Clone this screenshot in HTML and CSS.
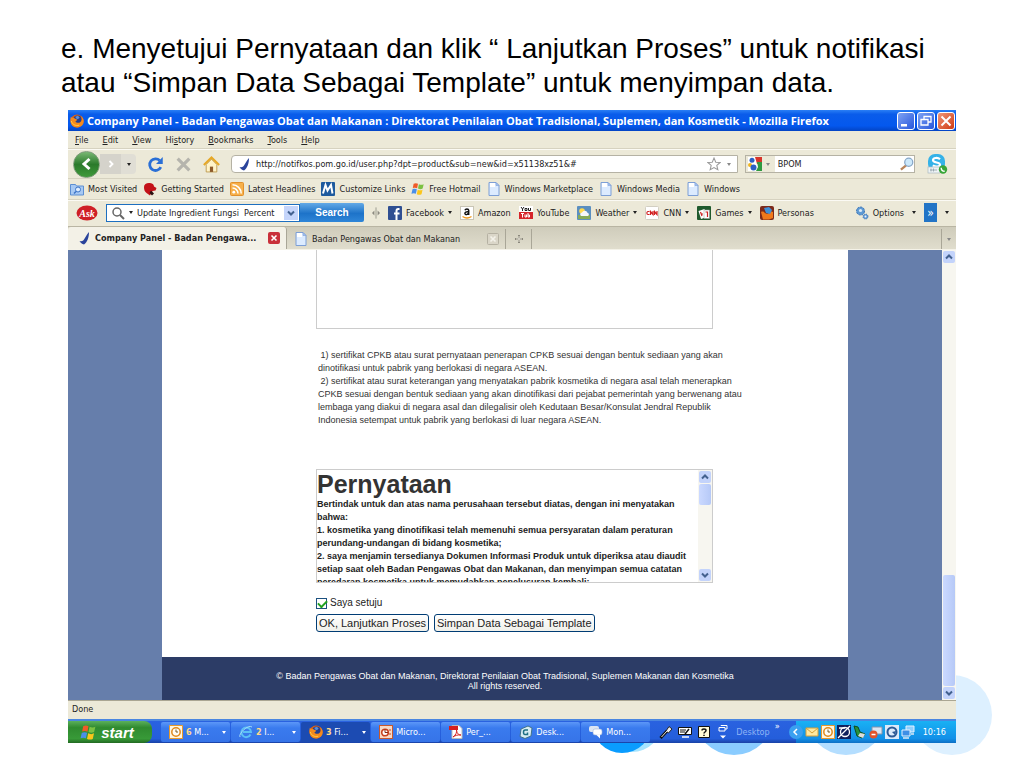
FILE: index.html
```html
<!DOCTYPE html>
<html lang="id">
<head>
  <meta charset="UTF-8">
  <meta name="viewport" content="width=device-width, initial-scale=1.0">
  <title>Company Panel - Badan Pengawas Obat dan Makanan</title>
  <link rel="stylesheet" href="styles.css">
</head>
<body>
  <!-- shared icons -->
  <svg class="defs" aria-hidden="true">
    <symbol id="page" viewBox="0 0 14 14">
      <path d="M2 .5h7l3 3v10H2z" fill="#dcebff" stroke="#7d9fd6"/>
      <path d="M3 1h5v4H3z" fill="#fff"/>
      <path d="M9 .5v3h3z" fill="#a9c5f2" stroke="#7d9fd6" stroke-width=".6"/>
    </symbol>
    <symbol id="fox" viewBox="0 0 16 16">
      <circle cx="8" cy="8" r="7.4" fill="#e8610a"/>
      <circle cx="8.6" cy="6.2" r="4.6" fill="#243f8f"/>
      <path d="M6 3l3-1 2 2-2 2-2-1z" fill="#5b8fd8"/>
      <path d="M1 3c0 0 1 1.500 3 1.500C5.500 4.500 6 5.500 7.500 6 9 6.500 7.500 8 6.200 8.200 7 10.500 11 11 13 8c1-2 .5-4-.5-5.500C15.500 4 16.500 8 15 11.500c-2.500 5-10 5-13 1C0 9 .3 5.500 1 3z" fill="#f58a1c"/>
      <path d="M1.500 8c1 4 5 6 9 4.800" fill="none" stroke="#ffd04a" stroke-width="1.100"/>
    </symbol>
    <symbol id="tick" viewBox="0 0 14 14">
      <path d="M12 1C12 6 10.500 11 7 13.500 5 13 3.500 12 2.500 10c2.500.5 3.500 0 4.500-1.500C8.500 6.500 9.500 3.500 12 1z" fill="#29439b"/>
    </symbol>
    <symbol id="winflag" viewBox="0 0 16 16">
      <path d="M3 2c2-1 3.500-.8 5 0L7 7.200C5.500 6.300 3.800 6.300 2 7z" fill="#ef5a28"/>
      <path d="M9 2.500c2 1 3.700 1 5.500 0l-1.200 5c-1.800 1-3.600.8-5.300 0z" fill="#7cc142"/>
      <path d="M1.700 8.300c2-.9 3.500-.7 5 0l-1.200 5.200c-1.500-.9-3.200-.9-5 0z" fill="#4a8fe8"/>
      <path d="M7.700 8.800c2 1 3.700 1 5.500 0L12 14c-1.800 1-3.600.8-5.400 0z" fill="#fbc61b"/>
    </symbol>
    <symbol id="up" viewBox="0 0 8 8"><path d="M1 5.500l3-3 3 3" fill="none" stroke="#43618f" stroke-width="2"/></symbol>
    <symbol id="down" viewBox="0 0 8 8"><path d="M1 2.500l3 3 3-3" fill="none" stroke="#43618f" stroke-width="2"/></symbol>
    <symbol id="clock" viewBox="0 0 14 14">
      <path d="M.5.500h13v13H.5z" fill="#fff6e0" stroke="#e89a2c"/>
      <circle cx="7" cy="7" r="4.200" fill="#fffdf5" stroke="#e08a1c" stroke-width="1.500"/>
      <path d="M7 4.500V7h2" fill="none" stroke="#7a5a20"/>
    </symbol>
  </svg>

  <main class="slide">
    <!-- decorative circles behind the window -->
    <svg class="dots" width="412" height="80" viewBox="0 0 412 80" aria-hidden="true">
      <circle cx="52" cy="47" r="30" fill="#a5e4ff"/>
      <circle cx="42" cy="48" r="30" fill="#0a9cff"/>
      <circle cx="154" cy="40" r="40" fill="#8accff"/>
      <circle cx="266" cy="40" r="40" fill="#b4deff"/>
      <circle cx="372" cy="40" r="40" fill="#ddf0ff"/>
    </svg>

    <h1 class="caption">e. Menyetujui Pernyataan dan klik “ Lanjutkan Proses” untuk notifikasi<br>atau “Simpan Data Sebagai Template” untuk menyimpan data.</h1>

    <section class="window">
      <header class="titlebar">
        <svg class="ico"><use href="#fox"/></svg>
        <span class="title">Company Panel - Badan Pengawas Obat dan Makanan : Direktorat Penilaian Obat Tradisional, Suplemen, dan Kosmetik - Mozilla Firefox</span>
        <button class="wbtn" aria-label="Minimize"><svg viewBox="0 0 16 16"><path d="M3 11h6v2.500H3z" fill="#fff"/></svg></button>
        <button class="wbtn" aria-label="Restore"><svg viewBox="0 0 16 16"><path d="M6 6V3.500h7V9h-3M3 6.500h7V12H3z" fill="none" stroke="#fff" stroke-width="1.300"/></svg></button>
        <button class="wbtn close" aria-label="Close"><svg viewBox="0 0 16 16"><path d="M3.500 3.500l9 9m0-9l-9 9" stroke="#fff" stroke-width="2"/></svg></button>
      </header>

      <nav class="menubar">
        <a href="#"><u>F</u>ile</a>
        <a href="#"><u>E</u>dit</a>
        <a href="#"><u>V</u>iew</a>
        <a href="#">Hi<u>s</u>tory</a>
        <a href="#"><u>B</u>ookmarks</a>
        <a href="#"><u>T</u>ools</a>
        <a href="#"><u>H</u>elp</a>
      </nav>

      <div class="navbar">
        <div class="backfwd">
          <button class="back" aria-label="Back"><svg viewBox="0 0 16 16"><path d="M10.500 3L5 8l5.500 5" fill="none" stroke="#fff" stroke-width="3"/></svg></button>
          <button class="fwd" aria-label="Forward"><svg viewBox="0 0 16 16"><path d="M6 4l4 4-4 4" fill="none" stroke="#fff" stroke-width="2.500"/></svg></button>
          <button class="hist" aria-label="Recent pages"><i class="arrow"></i></button>
        </div>
        <button class="nbtn" aria-label="Reload"><svg viewBox="0 0 16 16"><path d="M13 10.500A5.500 5.500 0 1 1 12 4.300" fill="none" stroke="#2a6fd6" stroke-width="2.600"/><path d="M14.800 1v6.500H8.500z" fill="#2a6fd6"/></svg></button>
        <button class="nbtn" aria-label="Stop"><svg viewBox="0 0 16 16"><path d="M2.500 2.500l11 11m0-11l-11 11" stroke="#b5b4ad" stroke-width="3"/></svg></button>
        <button class="nbtn" aria-label="Home"><svg viewBox="0 0 16 16"><path d="M3 8l5-5 5 5v7H3z" fill="#fff3c8" stroke="#b89448" stroke-width=".8"/><path d="M.8 8.500L8 1.500l7.200 7" fill="none" stroke="#e6a827" stroke-width="2"/><path d="M6.500 10h3v5h-3z" fill="#8d5a2c"/></svg></button>
        <div class="urlbox">
          <span class="site"><svg class="ico"><use href="#tick"/></svg></span>
          <input class="field" type="text" aria-label="Location" value="http://notifkos.pom.go.id/user.php?dpt=product&amp;sub=new&amp;id=x51138xz51&amp;#">
          <svg class="ico" viewBox="0 0 16 16"><path d="M8 1.200l2 4.700 5 .4-3.800 3.300 1.200 5L8 12l-4.400 2.600 1.200-5L1 6.300l5-.4z" fill="#fff" stroke="#9a9a9a" stroke-width="1.200"/></svg>
          <button class="mini" aria-label="History"><i class="arrow grey"></i></button>
        </div>
        <div class="searchbox">
          <span class="engine">
            <svg class="ico" viewBox="0 0 14 14"><path d="M0 0h14v14H0z" fill="#fff"/><path d="M7 0h7v7H9z" fill="#d8342a"/><path d="M9 5h5v9H8l2-4z" fill="#2f9a41"/><circle cx="4" cy="3.200" r="2.500" fill="#2b5fc4"/><circle cx="2" cy="8" r="2" fill="#f0b622"/><circle cx="5.500" cy="10.500" r="3" fill="#2b5fc4"/></svg>
            <i class="arrow grey"></i>
          </span>
          <input class="field" type="text" aria-label="Search the web" value="BPOM">
          <svg class="ico" viewBox="0 0 16 16"><path d="M7 9.500l-6 5" stroke="#b9855b" stroke-width="2.600"/><circle cx="10" cy="6" r="4.600" fill="#cde9fb" stroke="#86a6c8" stroke-width="1.400"/></svg>
        </div>
        <svg class="skype" viewBox="0 0 22 22"><rect x="2" y="1" width="17" height="17" rx="7" fill="#35b2e8"/><path d="M14 6.200C12 4.300 7 4.500 7 7.200c0 3 7 1.600 7 4.400 0 2.700-5 2.600-7.200.7" fill="none" stroke="#fff" stroke-width="2.200"/><rect x="2" y="14" width="12" height="6" fill="#eef3f5" stroke="#a9b8bf" stroke-width=".7"/><path d="M5 15.500v3m2.500-3v3M4 17h7" stroke="#8fa0a8" stroke-width=".8"/><circle cx="17" cy="16.500" r="4.200" fill="#38a538"/><path d="M15.200 14.800c0 2 1.500 3.500 3.500 3.500" fill="none" stroke="#fff" stroke-width="1.400"/></svg>
      </div>

      <nav class="bookmarks">
        <a href="#"><svg class="ico" viewBox="0 0 14 14"><path d="M.5 2.500h5l1 1.500h7v9H.5z" fill="#a7c9f3" stroke="#5c8fd2"/><circle cx="8" cy="7.500" r="2.500" fill="#dfeeff" stroke="#3b74c6"/><path d="M6 9.500l-2 2" stroke="#3b74c6" stroke-width="1.500"/></svg>Most Visited</a>
        <a href="#"><svg class="ico" viewBox="0 0 14 14"><path d="M1 5c0-3 3-4.500 6-4 3 .4 4 2 4 3.500l2.500 1.500-1 2.500-3 .5C9 11 7.500 12 7 13.500L3.500 11C1.500 9.500 1 7.500 1 5z" fill="#c31219"/><path d="M8 8.500l3 3-2 2L6.500 11z" fill="#2b1010"/></svg>Getting Started</a>
        <a href="#"><svg class="ico" viewBox="0 0 14 14"><rect x=".5" y=".5" width="13" height="13" rx="1" fill="#f7b04a" stroke="#e1902c"/><circle cx="3.800" cy="10.200" r="1.400" fill="#fff"/><path d="M2.500 6A5.500 5.500 0 0 1 8 11.500M2.500 2.800a8.700 8.700 0 0 1 8.700 8.700" fill="none" stroke="#fff" stroke-width="1.500"/></svg>Latest Headlines</a>
        <a href="#"><svg class="ico" viewBox="0 0 14 14"><rect width="14" height="14" rx="1" fill="#1e5a9e"/><path d="M2 11.500L4.500 3l2 5.500L10 3l1.500 8.500" fill="none" stroke="#fff" stroke-width="2"/></svg>Customize Links</a>
        <a href="#"><svg class="ico"><use href="#winflag"/></svg>Free Hotmail</a>
        <a href="#"><svg class="ico"><use href="#page"/></svg>Windows Marketplace</a>
        <a href="#"><svg class="ico"><use href="#page"/></svg>Windows Media</a>
        <a href="#"><svg class="ico"><use href="#page"/></svg>Windows</a>
      </nav>

      <div class="askbar">
        <svg class="asklogo" viewBox="0 0 22 16" role="img" aria-label="Ask"><ellipse cx="11" cy="8" rx="10.500" ry="7.500" fill="#cf1f26"/><text x="11" y="12" class="asktext">Ask</text></svg>
        <div class="combo">
          <svg class="ico" viewBox="0 0 14 14"><circle cx="6" cy="6" r="4" fill="none" stroke="#666" stroke-width="1.500"/><path d="M9 9l4 4" stroke="#666" stroke-width="2"/></svg>
          <i class="arrow"></i>
          <input class="field" type="text" aria-label="Ask search" value="Update Ingredient Fungsi  Percent">
          <button class="drop" aria-label="Open list"><svg><use href="#down"/></svg></button>
        </div>
        <button class="asksearch">Search</button>
        <svg class="split" viewBox="0 0 10 14"><path d="M5 0v14" stroke="#8c8a80"/><path d="M3 4L0 7l3 3zM7 4l3 3-3 3z" fill="#8c8a80"/></svg>
        <a href="#"><svg class="ico" viewBox="0 0 14 14"><rect width="14" height="14" rx="1" fill="#2f4f92"/><path d="M11.500 3h-1.200C9 3 8.500 3.700 8.500 5v9M6 7.500h5.500" fill="none" stroke="#fff" stroke-width="2"/></svg>Facebook<i class="arrow"></i></a>
        <a href="#"><svg class="ico" viewBox="0 0 14 14"><rect x=".5" y=".5" width="13" height="13" fill="#fff" stroke="#c9c5b5"/><path d="M5 4.200C5.500 2.500 8.500 2.500 8.700 4.300V9M8.500 5.800C6 5.500 4.800 6.200 4.900 7.500c.2 1.600 2.600 1.500 3.600-.3" fill="none" stroke="#111" stroke-width="1.500"/><path d="M2.500 10.500c3 2 6 2 9 0" fill="none" stroke="#f29a1c" stroke-width="1.300"/></svg>Amazon</a>
        <a href="#"><svg class="ico" viewBox="0 0 14 14"><path d="M0 0h14v6H0z" fill="#fff"/><path d="M0 6h14v7H0z" fill="#d6262b"/><path d="M2 1l1.500 2L5 1M3.500 3v2M6 2.500h2v2H6zM9.500 2v2.500h2V2" fill="none" stroke="#222"/><path d="M2 7.500h3M3.500 7.500v4M6 8.500v2.500h1.500V8.500M9 7v4h1.500V9H9" fill="none" stroke="#fff"/></svg>YouTube</a>
        <a href="#"><svg class="ico" viewBox="0 0 14 14"><rect width="14" height="14" rx="1" fill="#5b8fc0"/><path d="M1 9h12v4H1z" fill="#86ab59"/><circle cx="5" cy="5" r="2.800" fill="#ffd94d"/><path d="M4 10a2 2 0 0 1 1-3.600 3 3 0 0 1 5.500.3A1.800 1.800 0 0 1 11 10z" fill="#f4f7fa"/></svg>Weather<i class="arrow"></i></a>
        <a href="#"><svg class="ico" viewBox="0 0 14 14"><rect x=".5" y=".5" width="13" height="13" rx="1" fill="#fff" stroke="#d2cfc2"/><path d="M4.500 5.500H3C1.500 5.500 1.500 8.500 3 8.500h1.500M5.500 9V5.500l2.500 3V5M9.500 9V5.500l2.500 3V5" fill="none" stroke="#d21f1f" stroke-width="1.200"/></svg>CNN<i class="arrow"></i></a>
        <a href="#"><svg class="ico" viewBox="0 0 14 14"><rect width="14" height="14" rx="1" fill="#1f5a2d"/><path d="M1.500 5l6-2 2.500 8-6 2z" fill="#fff"/><path d="M7 4h5.500v8.500H7z" fill="#fff" stroke="#999" stroke-width=".5"/><path d="M3.500 6l1.500 4M8.500 6h2v5M4 8h2" fill="none" stroke="#c22" stroke-width="1.200"/></svg>Games<i class="arrow"></i></a>
        <a href="#"><svg class="ico" viewBox="0 0 14 14"><rect width="14" height="14" rx="2" fill="#7c2a1a"/><path d="M1 6c2-1 3 0 4 1 1.500 1.500 4 1 5-2l3 1v6l-4 1.500H3z" fill="#f0791c"/><path d="M4 2l5-1 3 3-2 4-4-1z" fill="#3f8fd8"/></svg>Personas</a>
        <a class="options" href="#"><svg class="ico" viewBox="0 0 14 14"><circle cx="5.500" cy="5" r="4" fill="#5e9ad4" stroke="#3e73b4" stroke-dasharray="2 1"/><circle cx="5.500" cy="4.500" r="1.600" fill="#dceaf7"/><circle cx="10.500" cy="10.500" r="2.500" fill="#5e9ad4" stroke="#3e73b4" stroke-dasharray="1 1"/><circle cx="10.500" cy="10.500" r="1" fill="#eef"/></svg>Options</a>
        <i class="arrow"></i>
        <button class="more" aria-label="More">»</button>
        <i class="arrow"></i>
      </div>

      <div class="tabs">
        <button class="tab active"><svg class="ico"><use href="#tick"/></svg><span>Company Panel - Badan Pengawa...</span><svg class="x" viewBox="0 0 12 12"><rect width="12" height="12" rx="2" fill="#c9303a"/><path d="M3.500 3.500l5 5m0-5l-5 5" stroke="#fff" stroke-width="1.600"/></svg></button>
        <button class="tab"><svg class="ico"><use href="#page"/></svg><span>Badan Pengawas Obat dan Makanan</span><svg class="x" viewBox="0 0 12 12"><rect x=".5" y=".5" width="11" height="11" rx="1" fill="#dad6c8" stroke="#b5b1a2"/><path d="M3.500 3.500l5 5m0-5l-5 5" stroke="#f4f2ea" stroke-width="1.600"/></svg></button>
        <button class="newtab" aria-label="New tab"><svg viewBox="0 0 10 10"><path d="M5 1v8M1 5h8" stroke="#8a877b" stroke-width="2"/><path d="M5 2v6M2 5h6" stroke="#e7e4d8"/></svg></button>
        <button class="alltabs" aria-label="List all tabs"><i class="arrow grey"></i></button>
      </div>

      <div class="viewport">
        <div class="page">
          <div class="form">
            <div class="upload"></div>
            <div class="notes">
              <p>&nbsp;1) sertifikat CPKB atau surat pernyataan penerapan CPKB sesuai dengan bentuk sediaan yang akan<br>dinotifikasi untuk pabrik yang berlokasi di negara ASEAN.</p>
              <p>&nbsp;2) sertifikat atau surat keterangan yang menyatakan pabrik kosmetika di negara asal telah menerapkan<br>CPKB sesuai dengan bentuk sediaan yang akan dinotifikasi dari pejabat pemerintah yang berwenang atau<br>lembaga yang diakui di negara asal dan dilegalisir oleh Kedutaan Besar/Konsulat Jendral Republik<br>Indonesia setempat untuk pabrik yang berlokasi di luar negara ASEAN.</p>
            </div>
            <div class="statement">
              <div class="statement-text">
                <h2>Pernyataan</h2>
                <p>Bertindak untuk dan atas nama perusahaan tersebut diatas, dengan ini menyatakan<br>bahwa:</p>
                <p>1. kosmetika yang dinotifikasi telah memenuhi semua persyaratan dalam peraturan<br>perundang-undangan di bidang kosmetika;</p>
                <p>2. saya menjamin tersedianya Dokumen Informasi Produk untuk diperiksa atau diaudit<br>setiap saat oleh Badan Pengawas Obat dan Makanan, dan menyimpan semua catatan<br>peredaran kosmetika untuk memudahkan penelusuran kembali;</p>
              </div>
              <div class="scroll">
                <button class="sbtn" aria-label="Up"><svg><use href="#up"/></svg></button>
                <div class="thumb short"></div>
                <button class="sbtn end" aria-label="Down"><svg><use href="#down"/></svg></button>
              </div>
            </div>
            <div class="agree">
              <input type="checkbox" id="setuju" checked>
              <label for="setuju">Saya setuju</label>
            </div>
            <div class="actions">
              <button>OK, Lanjutkan Proses</button>
              <button>Simpan Data Sebagai Template</button>
            </div>
          </div>
          <footer class="foot">© Badan Pengawas Obat dan Makanan, Direktorat Penilaian Obat Tradisional, Suplemen Makanan dan Kosmetika<br>All rights reserved.</footer>
        </div>
        <div class="scroll">
          <button class="sbtn" aria-label="Scroll up"><svg><use href="#up"/></svg></button>
          <div class="thumb long"></div>
          <button class="sbtn" aria-label="Scroll down"><svg><use href="#down"/></svg></button>
        </div>
      </div>

      <div class="status">Done</div>

      <footer class="taskbar">
        <button class="start"><svg><use href="#winflag"/></svg>start</button>
        <div class="tasks">
          <button class="task"><svg class="ico"><use href="#clock"/></svg><span><b>6</b> M...</span><i class="arrow"></i></button>
          <button class="task"><svg class="ico" viewBox="0 0 14 14"><path d="M11.500 9.500A4.800 4.800 0 1 1 12 7H4" fill="none" stroke="#5cc0f5" stroke-width="2"/><path d="M1 12C-1 9 9-1 13 2" fill="none" stroke="#a5dcf8"/></svg><span><b>2</b> I...</span><i class="arrow"></i></button>
          <button class="task on"><svg class="ico"><use href="#fox"/></svg><span><b>3</b> Fi...</span><i class="arrow"></i></button>
          <button class="task"><svg class="ico" viewBox="0 0 14 14"><rect x=".5" y=".5" width="13" height="13" fill="#f8d9c6" stroke="#c8582c"/><circle cx="6" cy="7.500" r="3.300" fill="#fff" stroke="#c8421c" stroke-width="1.600"/><path d="M6 4.500v3h3" stroke="#8c2a10" fill="none"/><path d="M11 4v2m0 2v2" stroke="#c8421c"/></svg><span>Micro...</span></button>
          <button class="task"><svg class="ico" viewBox="0 0 14 14"><path d="M3 .5h7l3 3v10H3z" fill="#fff" stroke="#bbb"/><path d="M0 1h9v4H0z" fill="#d51f1f"/><path d="M4 12c3-2 4-5 3.500-7C8 9 10 10 12 10 9 9.500 6 10.500 4 12z" fill="none" stroke="#d51f1f"/></svg><span>Per_...</span></button>
          <button class="task"><svg class="ico" viewBox="0 0 14 14"><path d="M2 4l7-3 4 2-1 8-6 2.500-5-2z" fill="#d6ecf3" stroke="#40728b"/><path d="M9 5H6C4 5 4 9.500 6 9.500h2.500V7.500" fill="none" stroke="#1d6f83" stroke-width="1.500"/></svg><span>Desk...</span></button>
          <button class="task"><svg class="ico" viewBox="0 0 14 14"><rect y="1" width="10" height="6" rx="2" fill="#dce6f2"/><rect x="4" y="4" width="9" height="6" rx="2" fill="#fff" stroke="#9db4d6" stroke-width=".6"/><path d="M7 9.500l4 4V9.500z" fill="#fff"/></svg><span>Mon...</span></button>
        </div>
        <div class="langbar">
          <svg class="ico" viewBox="0 0 14 14"><path d="M1.500 13L8 6" stroke="#111" stroke-width="3"/><path d="M7 6l3-4.500L13 4 9.500 8z" fill="#eee" stroke="#222"/><path d="M2.500 12L8 6" stroke="#eee"/></svg>
          <svg class="ico" viewBox="0 0 14 14"><path d="M.5 2.500h13v7H.5z" fill="#fff" stroke="#111"/><path d="M2 5h6M2 7h5" stroke="#111"/><path d="M7 9l4-5" stroke="#111" stroke-width="1.500"/><path d="M4 12h7" stroke="#fff" stroke-width="1.500"/></svg>
          <svg class="ico" viewBox="0 0 14 14"><path d="M1.500 1.500h11v11h-11z" fill="#fffbd8" stroke="#111"/><path d="M5 5.500C5 3.500 9 3.500 9 5.500 9 7 7 7 7 8.500m0 1.200v1.300" fill="none" stroke="#111" stroke-width="1.500"/></svg>
          <svg class="ico" viewBox="0 0 14 14"><path d="M5 1V.5h6v3.500H9M3 2.500h6V6H3z" fill="none" stroke="#fff"/><path d="M4 10.500h6l-3 3z" fill="#fff"/></svg>
          <span class="desk">Desktop</span><span class="chev">»</span>
        </div>
        <div class="tray">
          <button class="hide" aria-label="Hide icons"><svg viewBox="0 0 8 8"><path d="M5 1L2 4l3 3" fill="none" stroke="#fff" stroke-width="1.500"/></svg></button>
          <svg class="ico" viewBox="0 0 14 14"><path d="M1 3h12v8H1z" fill="#ffe9a0" stroke="#d4a03a"/><path d="M1 3l6 5 6-5" fill="none" stroke="#d4a03a"/></svg>
          <svg class="ico"><use href="#clock"/></svg>
          <svg class="ico" viewBox="0 0 14 14"><path d="M0 0h14v14H0z" fill="#10205c"/><circle cx="8" cy="7" r="4.500" fill="none" stroke="#fff" stroke-width="1.300"/><path d="M1 13L13 1M2 3h6" stroke="#fff" stroke-width="1.300"/></svg>
          <svg class="ico" viewBox="0 0 14 14"><path d="M1 1l4 1 2 5 5 2-3 4-5-2z" fill="#27913c" stroke="#0e4c1d"/><path d="M7 8l5 1-2 4-5-2z" fill="#ddd"/></svg>
          <svg class="ico" viewBox="0 0 14 14"><path d="M3 2h10v7H3z" fill="#dce5f2" stroke="#8794ac"/><circle cx="4.500" cy="9.500" r="4" fill="#e2542c"/><path d="M2.500 9.500h4" stroke="#fff" stroke-width="1.500"/></svg>
          <svg class="ico" viewBox="0 0 14 14"><path d="M0 0h14v14H0z" fill="#dceafa"/><circle cx="7" cy="7" r="4.500" fill="none" stroke="#2d5a96" stroke-width="2"/><path d="M7 7l4-1-1 4z" fill="#2d5a96"/></svg>
          <svg class="ico" viewBox="0 0 14 14"><path d="M5 1h8v6H5z" fill="#8fd0ff" stroke="#e4f2ff"/><path d="M1 5h8v6H1z" fill="#3f8fe6" stroke="#e4f2ff"/><path d="M2 13h6m2-4h3" stroke="#dfe9f5" stroke-width="1.500"/></svg>
          <time>10:16</time>
        </div>
      </footer>
    </section>
  </main>
</body>
</html>
```
FILE: styles.css
```css
* {
  box-sizing: border-box;
}
body {
  margin: 0;
  background: #fff;
  font-family: "Liberation Sans", Arial, sans-serif;
  color: #000;
}
.defs {
  display: none;
}
button, input {
  font: inherit;
  color: inherit;
  margin: 0;
  padding: 0;
}
button {
  display: flex;
  align-items: center;
  justify-content: center;
  border: none;
  background: none;
}
a {
  color: inherit;
  text-decoration: none;
}
.slide {
  position: relative;
  min-height: 100vh;
  padding: 32px 68px 26px;
}
.dots {
  position: absolute;
  right: 32px;
  bottom: 14px;
}
.caption {
  margin: 0 -7px 10px;
  font-size: 28px;
  line-height: 34px;
  font-weight: normal;
  white-space: nowrap;
}

/* window */
.window {
  position: relative;
  background: #ece9d8;
  font-family: "DejaVu Sans Condensed", "DejaVu Sans", sans-serif;
  font-size: 9px;
  color: #222;
  white-space: nowrap;
}
.ico {
  width: 14px;
  height: 14px;
  flex: none;
}
.arrow {
  flex: none;
  border: 2px solid transparent;
  border-top: 3px solid #222;
  border-bottom: none;
}
.arrow.grey {
  border-top-color: #888;
}
.titlebar {
  display: flex;
  align-items: center;
  gap: 2px;
  height: 21px;
  padding: 0 1px 0 2px;
  background: linear-gradient(#2a7ff5, #0a5cea 20%, #0458ee 75%, #0344c4);
  color: #fff;
  font-family: "Open Sans", "Noto Sans", sans-serif;
  font-size: 11px;
  font-weight: bold;
}
.title {
  flex: 1;
  padding-left: 1px;
  overflow: hidden;
}
.wbtn {
  width: 18px;
  height: 18px;
  border: 1px solid #fff;
  border-radius: 3px;
  background: linear-gradient(135deg, #7fa3f3, #2656dc);
}
.wbtn.close {
  background: linear-gradient(135deg, #f0977a, #cf3a12);
}
.wbtn svg {
  width: 16px;
  height: 16px;
}
.menubar {
  display: flex;
  align-items: center;
  gap: 14px;
  height: 18px;
  padding: 0 7px;
  border-bottom: 1px solid #d6d2c0;
}
.navbar {
  display: flex;
  align-items: center;
  gap: 11px;
  height: 30px;
  padding: 0 8px 0 5px;
  border-top: 1px solid #fbfaf4;
  border-bottom: 1px solid #d6d2c0;
}
.backfwd {
  display: flex;
  align-items: center;
}
.back {
  width: 27px;
  height: 27px;
  border: 1px solid #7c9a78;
  border-radius: 50%;
  background: linear-gradient(#7ab873, #2b7a2b 50%, #3f9a3a);
}
.back svg {
  width: 16px;
  height: 16px;
}
.fwd {
  width: 21px;
  height: 20px;
  background: #d5d3cb;
}
.fwd svg {
  width: 12px;
  height: 12px;
}
.hist {
  width: 15px;
  height: 20px;
  border-radius: 0 4px 4px 0;
  background: #e0ded5;
}
.nbtn svg {
  width: 17px;
  height: 17px;
}
.urlbox, .searchbox {
  display: flex;
  align-items: center;
  height: 18px;
  border: 1px solid #b5b2a4;
  background: #fff;
}
.urlbox {
  flex: 3;
  border-radius: 4px 0 0 4px;
}
.searchbox {
  flex: 1;
  margin-left: -4px;
}
.site {
  display: flex;
  padding: 1px 5px;
}
.field {
  flex: 1;
  min-width: 0;
  border: none;
  outline: none;
  background: none;
}
.mini {
  width: 16px;
  height: 16px;
}
.engine {
  display: flex;
  align-items: center;
  gap: 4px;
  height: 100%;
  padding: 0 5px 0 2px;
  margin-right: 3px;
  background: #ece9d8;
}
.skype {
  width: 22px;
  height: 22px;
}
.bookmarks {
  display: flex;
  align-items: center;
  gap: 6px;
  height: 21px;
  padding: 0 2px;
  border-bottom: 1px solid #d6d2c0;
}
.bookmarks a, .askbar a {
  display: flex;
  align-items: center;
  gap: 4px;
}
.askbar {
  display: flex;
  align-items: center;
  gap: 8px;
  height: 26px;
  padding: 0 7px 2px 8px;
  border-top: 1px solid #fbfaf4;
}
.asklogo {
  width: 22px;
  height: 16px;
}
.asktext {
  fill: #fff;
  font: italic bold 10px "Liberation Serif", serif;
  text-anchor: middle;
}
.combo {
  display: flex;
  align-items: center;
  gap: 4px;
  width: 194px;
  height: 18px;
  padding: 0 1px 0 4px;
  border: 1px solid #1d6fc0;
  background: #fff;
}
.drop {
  width: 14px;
  height: 14px;
  background: #c5d5fb;
}
.drop svg {
  width: 8px;
  height: 8px;
}
.asksearch {
  width: 64px;
  height: 19px;
  margin-left: -8px;
  border-radius: 0 2px 2px 0;
  background: linear-gradient(#63a9e6, #1d73c9 55%, #2f86d8);
  color: #fff;
  font-family: "Liberation Sans", Arial, sans-serif;
  font-size: 10px;
  font-weight: bold;
}
.split {
  width: 8px;
  height: 14px;
}
.options {
  margin-left: auto;
}
.more {
  width: 13px;
  height: 19px;
  background: #2274c6;
  color: #fff;
  font-size: 12px;
}
.tabs {
  display: flex;
  align-items: flex-end;
  height: 24px;
  border-top: 1px solid #b9b5a3;
  border-bottom: 1px solid #f4f2e8;
  background: linear-gradient(#cfccbb, #e0ddcd);
}
.tab {
  gap: 4px;
  width: 219px;
  height: 20px;
  padding: 0 6px 0 7px;
  border-right: 1px solid #a9a697;
}
.tab span {
  flex: 1;
  text-align: left;
}
.tab.active {
  height: 22px;
  padding-left: 9px;
  border-radius: 3px 3px 0 0;
  background: #f3f1e7;
  font-weight: bold;
}
.x {
  width: 12px;
  height: 12px;
}
.newtab {
  width: 26px;
  height: 20px;
  border-right: 1px solid #a9a697;
}
.newtab svg {
  width: 10px;
  height: 10px;
}
.alltabs {
  width: 15px;
  height: 20px;
  margin-left: auto;
  border-left: 1px solid #a9a697;
}

/* page inside the browser */
.viewport {
  display: flex;
  background: #667eab;
}
.page {
  flex: 1;
  margin: 0 94px;
  background: #fff;
  font-family: "Liberation Sans", Arial, sans-serif;
}
.form {
  width: 598px;
  padding: 0 0 25px 154px;
}
.upload {
  width: 397px;
  height: 79px;
  border: 1px solid #ccc;
  border-top: none;
}
.notes {
  padding: 20px 2px 42px;
  line-height: 13px;
  color: #333;
}
p {
  margin: 0;
}
.statement {
  display: flex;
  width: 397px;
  height: 114px;
  border: 1px solid #ccc;
  overflow: hidden;
}
.statement-text {
  flex: 1;
  line-height: 13px;
  font-weight: bold;
  color: #222;
}
.statement h2 {
  margin: 0;
  font-size: 25px;
  line-height: 28px;
  color: #333;
}
.scroll {
  display: flex;
  flex-direction: column;
  width: 14px;
  padding: 1px;
  gap: 1px;
  background: #f7f6f0;
}
.sbtn {
  height: 12px;
  border-radius: 2px;
  background: #c3d3fb;
}
.sbtn.end {
  margin-top: auto;
}
.sbtn svg {
  width: 8px;
  height: 8px;
}
.thumb {
  border-radius: 2px;
  background: linear-gradient(90deg, #cbd9ff, #b6c9f7);
}
.thumb.short {
  height: 21px;
}
.thumb.long {
  height: 111px;
  margin-top: auto;
}
.agree {
  display: flex;
  align-items: center;
  gap: 3px;
  padding: 14px 0 5px;
  font-size: 10px;
  line-height: 12px;
}
.agree input {
  appearance: none;
  width: 11px;
  height: 11px;
  border: 1px solid #1c5180;
  background: #fff;
}
.agree input:checked::before {
  content: "";
  display: block;
  width: 7px;
  height: 4px;
  margin: 1px;
  border-left: 2px solid #21a121;
  border-bottom: 2px solid #21a121;
  transform: rotate(-45deg);
}
.actions {
  display: flex;
  gap: 5px;
}
.actions button {
  height: 18px;
  padding: 0 2px;
  border: 1px solid #003c74;
  border-radius: 3px;
  background: linear-gradient(#fff, #f0f0ea);
  font-size: 11px;
}
.foot {
  padding: 14px 0 9px;
  background: #2c3c66;
  color: #fff;
  line-height: 10px;
  text-align: center;
}
.status {
  height: 19px;
  padding: 0 4px;
  border-top: 1px solid #aaa693;
  line-height: 17px;
}

/* taskbar */
.taskbar {
  display: flex;
  height: 24px;
  border-top: 2px solid #4a86e0;
  background: linear-gradient(#2a62e0, #245edb 80%, #1941a5);
  color: #fff;
}
.start {
  gap: 4px;
  width: 84px;
  padding-right: 6px;
  border-radius: 0 8px 8px 0;
  background: linear-gradient(#5cb05c, #2f8a2f 30%, #389a38 80%, #226a22);
  font-family: "Liberation Sans", Arial, sans-serif;
  font-size: 15px;
  font-style: italic;
  font-weight: bold;
}
.start svg {
  width: 17px;
  height: 17px;
}
.tasks {
  flex: 1;
  display: flex;
  gap: 1px;
  padding: 1px 0 1px 9px;
}
.task {
  flex: 1;
  gap: 3px;
  padding: 0 4px 0 8px;
  border-radius: 2px;
  background: linear-gradient(#5c97f8, #3a7bee 30%, #3674e8);
}
.task span {
  flex: 1;
  text-align: left;
}
.task b {
  color: #ffd98a;
}
.task.on {
  background: #1c4bb2;
}
.task .arrow {
  border-top-color: #fff;
}
.langbar {
  display: flex;
  align-items: center;
  gap: 5px;
  padding: 0 16px 0 9px;
}
.desk {
  padding-left: 1px;
  color: #8fb4f5;
}
.chev {
  align-self: flex-start;
}
.tray {
  display: flex;
  align-items: center;
  gap: 2px;
  padding-right: 10px;
  background: linear-gradient(#19b1f4, #1290e8 80%, #0d6fc4);
}
.hide {
  width: 14px;
  height: 14px;
  margin-left: -7px;
  border-radius: 50%;
  background: #3aa0f0;
}
.hide svg {
  width: 8px;
  height: 8px;
}
.tray time {
  padding-left: 6px;
}
```
